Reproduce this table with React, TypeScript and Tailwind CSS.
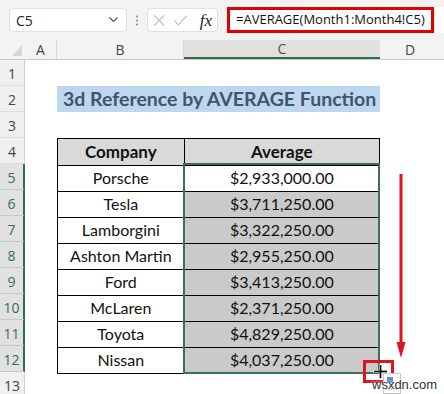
import React from 'react';

const rows = [
  { company: 'Porsche', avg: '$2,933,000.00' },
  { company: 'Tesla', avg: '$3,711,250.00' },
  { company: 'Lamborgini', avg: '$3,322,250.00' },
  { company: 'Ashton Martin', avg: '$2,955,250.00' },
  { company: 'Ford', avg: '$3,413,250.00' },
  { company: 'McLaren', avg: '$2,371,250.00' },
  { company: 'Toyota', avg: '$4,829,250.00' },
  { company: 'Nissan', avg: '$4,037,250.00' },
];

const cellFont = { fontFamily: 'Lato, "Open Sans", sans-serif' };

function FormulaBar() {
  return (
    <div className="flex h-[40px] items-center bg-[#f3f3f3]" style={{ fontFamily: '"Open Sans", "Noto Sans", sans-serif' }}>
      <div className="ml-[9px] flex h-[24px] w-[118px] items-center justify-between rounded-[4px] border border-[#e0e0e0] bg-white pl-[6px] pr-[8px] text-[14px] text-[#222]">
        <span>C5</span>
        <svg width="9" height="6" viewBox="0 0 9 6">
          <polyline points="0.5,0.5 4.5,4.5 8.5,0.5" fill="none" stroke="#555" strokeWidth="1.1" />
        </svg>
      </div>
      <svg className="ml-[8px]" width="4" height="11" viewBox="0 0 4 11">
        <circle cx="2" cy="1.5" r="1" fill="#888" />
        <circle cx="2" cy="5.5" r="1" fill="#888" />
        <circle cx="2" cy="9.5" r="1" fill="#888" />
      </svg>
      <div className="ml-[8px] flex h-[24px] w-[71px] items-center rounded-[4px] border border-[#e0e0e0] bg-white px-[5px]">
        <svg width="13" height="13" viewBox="0 0 13 13">
          <line x1="1" y1="1" x2="12" y2="12" stroke="#c4c4c4" strokeWidth="1.2" />
          <line x1="12" y1="1" x2="1" y2="12" stroke="#c4c4c4" strokeWidth="1.2" />
        </svg>
        <svg className="ml-[9px]" width="14" height="11" viewBox="0 0 14 11">
          <polyline points="0.5,5.5 4.5,10 13.5,0.5" fill="none" stroke="#c4c4c4" strokeWidth="1.2" />
        </svg>
        <span
          className="ml-[12px] text-[17px] italic leading-none text-[#222]"
          style={{ fontFamily: '"Liberation Serif", "DejaVu Serif", serif' }}
        >
          fx
        </span>
      </div>
      <div className="ml-[9px] flex h-[26px] w-[207px] items-center overflow-hidden whitespace-nowrap border-[3px] border-[#e00000] bg-white pl-[6px] text-[13px] text-[#111]">
        =AVERAGE(Month1:Month4!C5)
      </div>
      <div className="ml-[1px] h-[26px] flex-1 bg-white" />
    </div>
  );
}

function ColumnHeaders() {
  return (
    <div
      className="grid h-[20px] grid-cols-[25px_32px_127px_196px_1fr] border-b border-[#c8c8c8] bg-[#f3f3f3] text-[14px] text-[#444]"
      style={{ fontFamily: '"Open Sans", "Noto Sans", sans-serif' }}
    >
      <div className="flex items-end justify-end pb-[3px] pr-[3px]">
        <svg width="10" height="11" viewBox="0 0 10 11">
          <polygon points="10,0 10,11 0,11" fill="#d6d6d6" />
        </svg>
      </div>
      <div className="flex items-center justify-center border-r border-[#dadada] leading-none">A</div>
      <div className="flex items-center justify-center border-r border-[#dadada] leading-none">B</div>
      <div className="flex items-center justify-center border-b-2 border-[#2f6e47] bg-[#e0e0e0] leading-none text-[#3d5a48]">C</div>
      <div className="flex items-center pl-[25px] leading-none">D</div>
    </div>
  );
}

export default function App() {
  const rowNums = Array.from({ length: 13 }, (_, i) => i + 1);
  return (
    <div className="h-[394px] w-[444px] overflow-hidden bg-white">
      <FormulaBar />
      <div className="relative">
        <ColumnHeaders />
        <div className="grid grid-cols-[25px_32px_127px_196px_1fr] grid-rows-[repeat(13,26px)]">
          {rowNums.map((n) => {
            const sel = n >= 5 && n <= 12;
            return (
              <div
                key={n}
                style={{ gridRow: n, gridColumn: 1, fontFamily: '"Open Sans", "Noto Sans", sans-serif' }}
                className={
                  sel
                    ? 'flex items-center justify-center border-b border-r-2 border-b-[#c9c9c9] border-r-[#2f6e47] bg-[#e1e1e1] pt-[2px] text-[14px] text-[#3a6e4d]'
                    : 'flex items-center justify-center border-b border-r border-b-[#dedede] border-r-[#cfcfcf] bg-[#f0f0f0] pt-[2px] text-[14px] text-[#444]'
                }
              >
                {n}
              </div>
            );
          })}

          <div className="col-span-2 col-start-3 row-start-2 flex items-center bg-[#bdd7ee] pl-[6px]">
            <span className="text-[19.5px] font-bold text-[#44546a]" style={cellFont}>
              3d Reference by AVERAGE Function
            </span>
          </div>

          <table
            className="col-span-2 col-start-3 row-span-9 row-start-4 table-fixed border-collapse text-[16px] text-[#111]"
            style={cellFont}
          >
            <colgroup>
              <col className="w-[127px]" />
              <col className="w-[196px]" />
            </colgroup>
            <tbody>
              <tr className="h-[26px] bg-[#d9d9d9] text-[17px] font-bold">
                <td className="border border-black text-center">Company</td>
                <td className="border border-black text-center">Average</td>
              </tr>
              {rows.map((r, i) => (
                <tr key={r.company} className="h-[26px]">
                  <td className="border border-black text-center">{r.company}</td>
                  <td className={i === 0 ? 'border border-black bg-white text-center' : 'border border-black bg-[#cacaca] text-center'}>
                    {r.avg}
                  </td>
                </tr>
              ))}
            </tbody>
          </table>
        </div>

        {/* selection outline C5:C12 */}
        <div className="pointer-events-none absolute left-[183px] top-[123px] h-[211px] w-[197px] border-2 border-[#3a7352]" />

        {/* drag arrow */}
        <svg className="absolute left-[396px] top-[134px]" width="10" height="185" viewBox="0 0 10 185">
          <rect x="3.5" y="0" width="3" height="172" fill="#e0141c" />
          <polygon points="0.5,168 9.5,168 5,184" fill="#e0141c" />
        </svg>

        {/* fill handle marker */}
        <div className="absolute left-[363px] top-[320px] h-[23px] w-[31px] border-[3px] border-[#e0141c]" />
        <svg className="absolute left-[373px] top-[324px]" width="15" height="15" viewBox="0 0 15 15">
          <rect x="6" y="0.5" width="3" height="14" fill="white" />
          <rect x="0.5" y="6" width="14" height="3" fill="white" />
          <rect x="6.6" y="1" width="1.8" height="13" fill="#111" />
          <rect x="1" y="6.6" width="13" height="1.8" fill="#111" />
        </svg>
        <svg className="absolute left-[383px] top-[333px]" width="18" height="21" viewBox="0 0 18 21">
          <rect x="0.5" y="0.5" width="17" height="20" fill="white" stroke="#c8c8c8" />
          <rect x="4" y="4" width="6" height="6" fill="#5b8fd9" />
          <line x1="3" y1="16" x2="14" y2="16" stroke="#666" strokeDasharray="1 1.5" />
        </svg>
        <span
          className="absolute left-[372px] top-[335px] text-[13px] text-[#333]"
          style={{ fontFamily: '"Liberation Sans", Arial, sans-serif', textShadow: '0 0 2px #fff, 0 0 2px #fff' }}
        >
          wsxdn.com
        </span>
      </div>
    </div>
  );
}
